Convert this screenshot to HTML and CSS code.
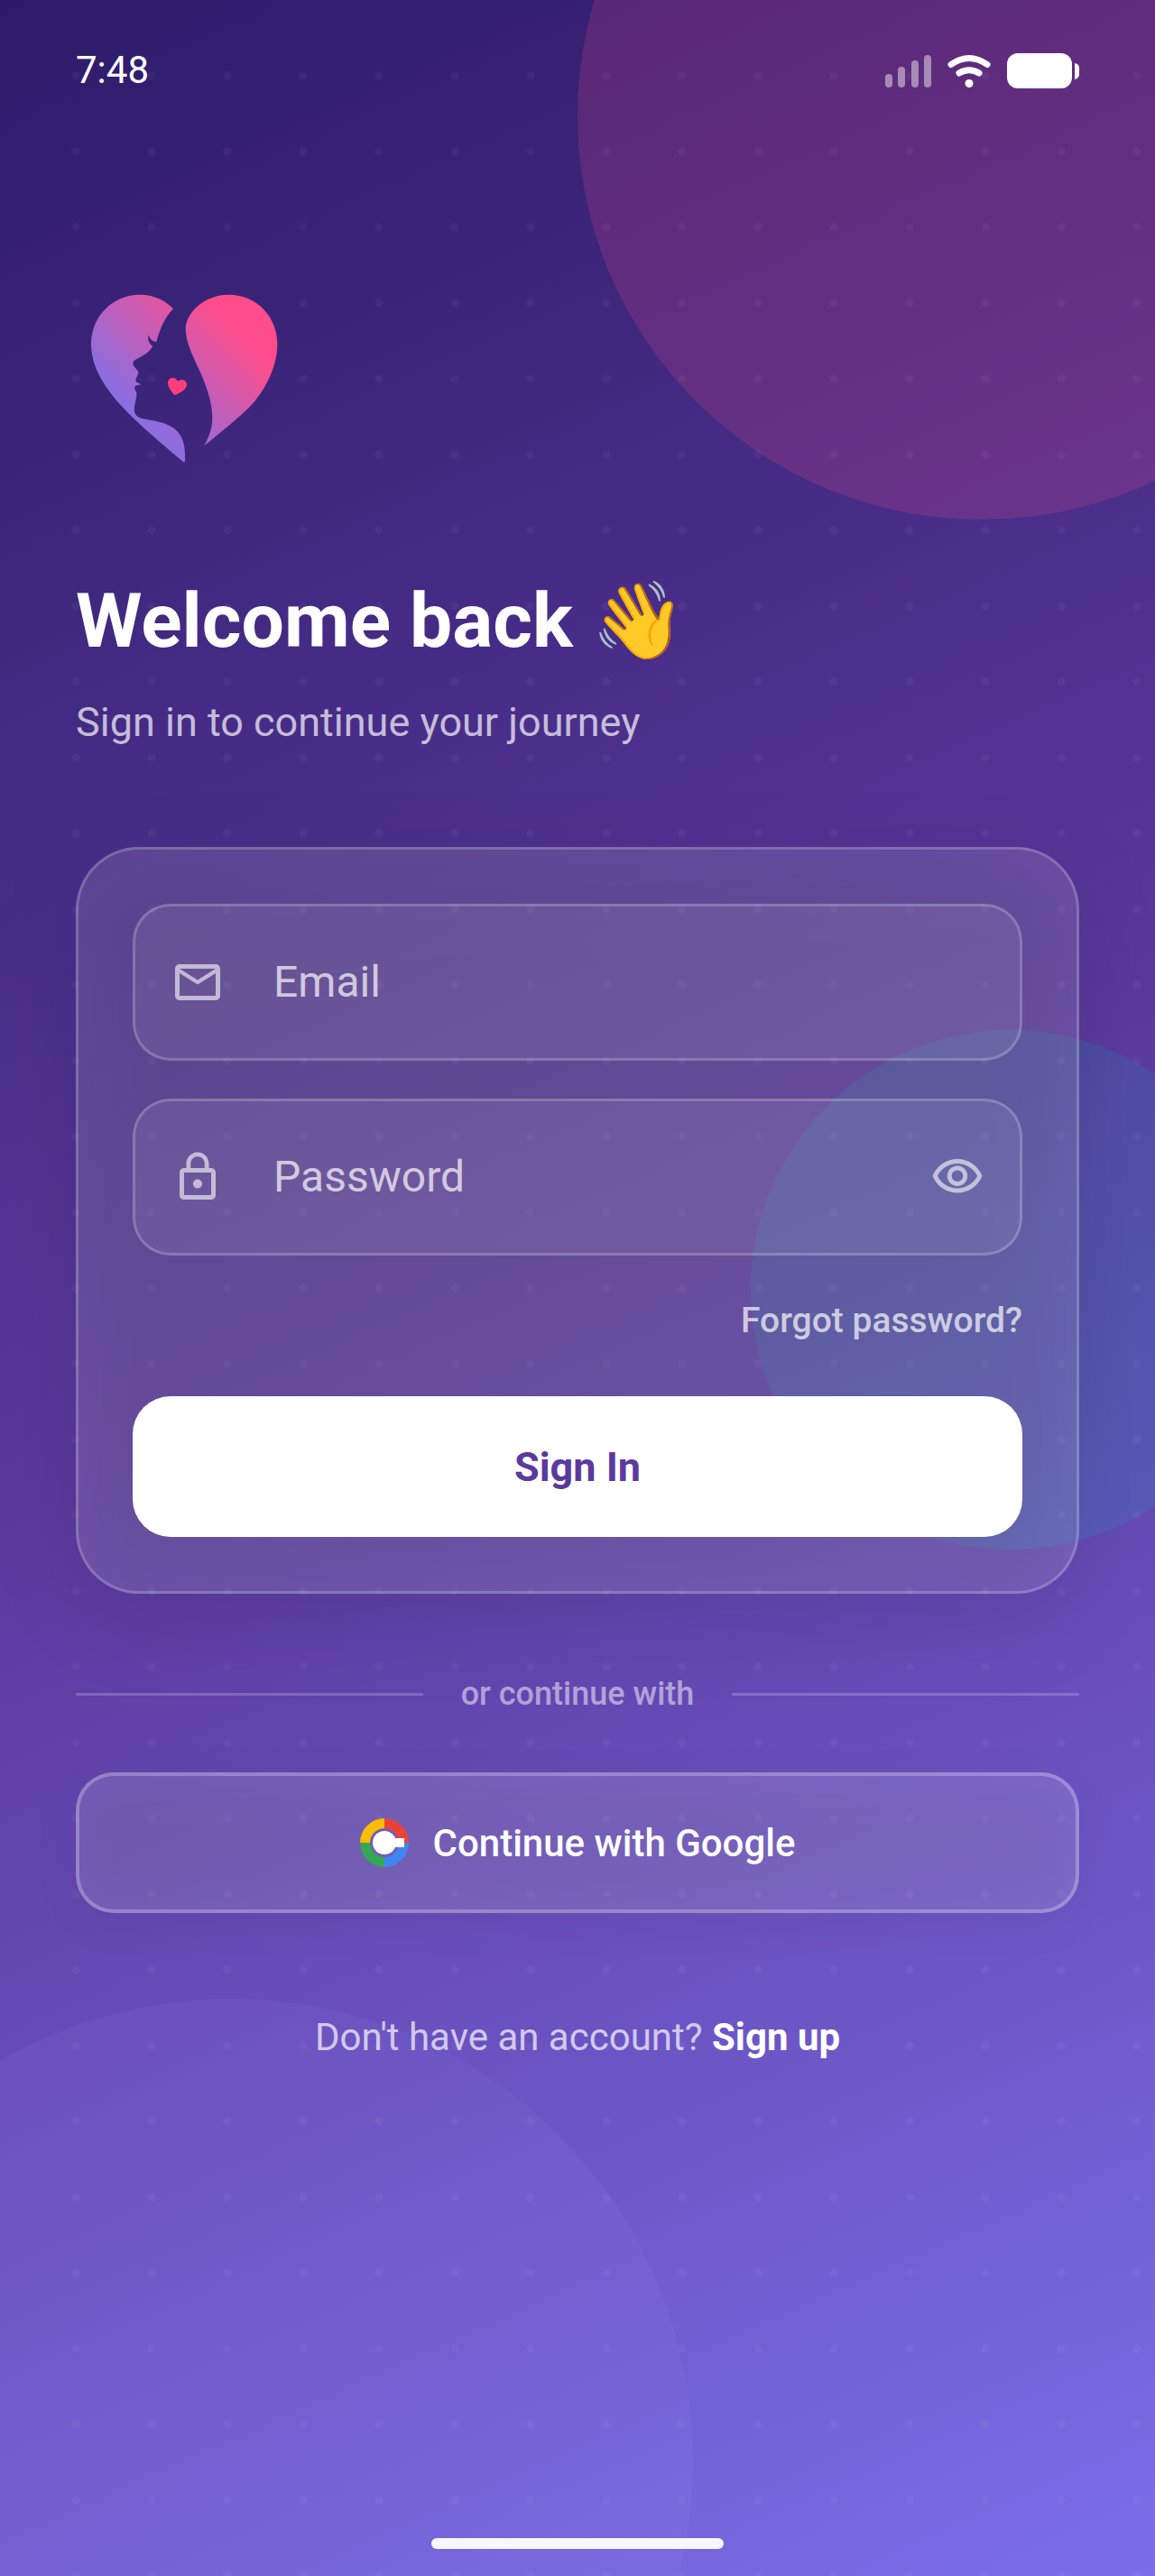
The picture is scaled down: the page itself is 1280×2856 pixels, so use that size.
FILE: index.html
```html
<!DOCTYPE html>
<html lang="en">
<head>
<meta charset="utf-8">
<meta name="viewport" content="width=device-width, initial-scale=1">
<title>Sign in</title>
<link rel="stylesheet" href="styles.css">
</head>
<body>
<div class="screen">
  <div class="backdrop" aria-hidden="true">
    <span class="orb orb-pink"></span>
    <span class="orb orb-teal"></span>
    <span class="orb orb-violet"></span>
    <span class="dots"></span>
  </div>

  <header class="status">
    <time class="status-time">7:48</time>
    <div class="status-icons" aria-hidden="true">
      <svg width="51" height="39" viewBox="0 0 51 39" fill="#fff" fill-opacity=".45">
        <rect x="0" y="23" width="8" height="15" rx="4"/>
        <rect x="14" y="15" width="8" height="23" rx="4"/>
        <rect x="29" y="8" width="8" height="30" rx="4"/>
        <rect x="43" y="2" width="8" height="36" rx="4"/>
      </svg>
      <svg width="48" height="39" viewBox="0 0 48 39" fill="none" stroke="#fff" stroke-width="7" stroke-linecap="round">
        <path d="M4 12.500Q24-1.500 44 12.500"/>
        <path d="M13 22Q24 15.500 35 22"/>
        <circle cx="24" cy="33.500" r="4.500" fill="#fff" stroke="none"/>
      </svg>
      <svg width="80" height="39" viewBox="0 0 80 39" fill="#fff">
        <rect width="72" height="39" rx="12"/>
        <path d="M75 11q5 1 5 5v7q0 5-5 6z"/>
      </svg>
    </div>
  </header>

  <main class="content">
    <svg class="logo" viewBox="72 0 720 720" role="img" aria-label="Logo">
      <defs>
        <linearGradient id="heart" gradientUnits="userSpaceOnUse" x1="150" y1="340" x2="450" y2="40">
          <stop offset="0" stop-color="#8c6ee0"/>
          <stop offset="1" stop-color="#ff4d8b"/>
        </linearGradient>
      </defs>
      <path fill="url(#heart)" d="M396 127C370 98 330 80 285 80C195 80 123 152 123 245C123 330 180 410 265 492C315 540 385 600 432 638C434 638 435 635 435 628C436 590 432 555 405 530C372 500 325 500 290 491C270 486 264 470 267 452C269 436 275 425 274 408C273 400 266 396 268 388C269 381 280 382 289 379C284 374 272 373 271 366C271 357 279 350 280 340C280 328 262 322 262 309C262 298 275 295 290 286C306 277 318 267 328 252C316 245 310 230 313 214C318 226 325 236 340 237C352 195 368 155 396 127Z"/>
      <path fill="url(#heart)" d="M580 80C670 80 742 150 742 245C742 320 700 400 655 448C620 486 550 540 499 583C514 555 526 525 526 490C526 430 500 370 480 325C460 282 437 235 437 192C440 135 505 80 580 80Z"/>
      <path fill="#ff3f7c" d="M400 414C390 402 378 388 378 373C379 355 403 350 411 368C422 358 441 362 441 380C440 395 420 407 400 414Z"/>
    </svg>

    <h1 class="title">Welcome back 👋</h1>
    <p class="subtitle">Sign in to continue your journey</p>

    <form class="card">
      <label class="field" for="email">
        <svg class="icon" viewBox="0 0 24 24" aria-hidden="true"><path d="M22 6c0-1.100-.9-2-2-2H4c-1.100 0-2 .9-2 2v12c0 1.100.9 2 2 2h16c1.100 0 2-.9 2-2V6zm-2 0l-8 5-8-5h16zm0 12H4V8l8 5 8-5v10z"/></svg>
        <input class="input" id="email" type="email" placeholder="Email" aria-label="Email">
      </label>
      <div class="field">
        <label class="icon-label" for="password" aria-label="Password">
          <svg class="icon" viewBox="0 0 24 24" aria-hidden="true"><path d="M12 17c1.100 0 2-.9 2-2s-.9-2-2-2-2 .9-2 2 .9 2 2 2zm6-9h-1V6c0-2.760-2.240-5-5-5S7 3.240 7 6v2H6c-1.100 0-2 .9-2 2v10c0 1.100.9 2 2 2h12c1.100 0 2-.9 2-2V10c0-1.100-.9-2-2-2zM8.900 6c0-1.710 1.390-3.100 3.100-3.100s3.100 1.390 3.100 3.100v2H8.900V6zM18 20H6V10h12v10z"/></svg>
        </label>
        <input class="input" id="password" type="password" placeholder="Password">
        <button class="reveal" type="button" aria-label="Show password">
          <svg class="icon" viewBox="0 0 24 24" aria-hidden="true"><path d="M12 6c3.790 0 7.170 2.130 8.820 5.500C19.170 14.870 15.790 17 12 17s-7.170-2.130-8.820-5.500C4.830 8.130 8.210 6 12 6m0-2C7 4 2.730 7.110 1 11.500 2.730 15.890 7 19 12 19s9.270-3.110 11-7.500C21.270 7.110 17 4 12 4zm0 5c1.380 0 2.500 1.120 2.500 2.500S13.380 14 12 14s-2.500-1.120-2.500-2.500S10.620 9 12 9m0-2c-2.480 0-4.500 2.020-4.500 4.500S9.520 16 12 16s4.500-2.020 4.500-4.500S14.480 7 12 7z"/></svg>
        </button>
      </div>
      <a class="forgot" href="#">Forgot password?</a>
      <button class="submit" type="submit">Sign In</button>
    </form>

    <div class="divider">or continue with</div>

    <button class="google" type="button">
      <svg width="54" height="54" viewBox="0 0 54 54" aria-hidden="true">
        <path fill="#ea4335" d="M27 0a27 27 0 0 1 27 27H43A16 16 0 0 0 27 11z"/>
        <path fill="#4285f4" d="M54 27a27 27 0 0 1-27 27V43a16 16 0 0 0 16-16z"/>
        <path fill="#34a853" d="M27 54A27 27 0 0 1 0 27h11a16 16 0 0 0 16 16z"/>
        <path fill="#fbbc05" d="M0 27A27 27 0 0 1 27 0v11a16 16 0 0 0-16 16z"/>
        <circle cx="27" cy="27" r="13" fill="#fff"/>
        <path fill="#fff" d="M27 22h22v10H27z"/>
      </svg>
      <span>Continue with Google</span>
    </button>

    <p class="signup">Don't have an account? <a href="#">Sign up</a></p>
  </main>

  <div class="home-bar" aria-hidden="true"></div>
</div>
</body>
</html>
```
FILE: styles.css
```css
*, *::before, *::after {
  box-sizing: border-box;
}

body {
  margin: 0;
  font-family: Roboto, "Noto Color Emoji", sans-serif;
  color: #fff;
}

.screen {
  position: relative;
  isolation: isolate;
  display: flex;
  flex-direction: column;
  min-height: 100vh;
  padding: 54px 84px 30px;
  background: linear-gradient(156deg, #2d1b69 0%, #5b3a9e 50%, #7b6ee8 100%);
}

/* Decorative circles and dot grid behind the content */
.backdrop {
  position: absolute;
  inset: 0;
  z-index: -1;
  overflow: hidden;
}

.orb {
  position: absolute;
  aspect-ratio: 1;
  border-radius: 50%;
}

.orb-pink {
  top: -320px;
  left: 50%;
  width: 70%;
  background: rgba(255, 77, 141, 0.18);
}

.orb-teal {
  top: 40%;
  left: 65%;
  width: 45%;
  background: rgba(0, 206, 201, 0.12);
}

.orb-violet {
  bottom: -384px;
  left: -20%;
  width: 80%;
  background: rgba(162, 155, 254, 0.08);
}

.dots {
  position: absolute;
  inset: 42px 0 0 42px;
  background: radial-gradient(circle, rgba(255, 255, 255, 0.04) 4px, transparent 5px) 0 0 / 84px 84px;
}

.status {
  display: flex;
  align-items: center;
  justify-content: space-between;
}

.status-time {
  font-size: 42px;
  line-height: 48px;
}

.status-icons {
  display: flex;
  gap: 18px;
}

.content {
  display: flex;
  flex-direction: column;
  padding-top: 198px;
}

.logo {
  width: 240px;
  height: 240px;
}

.title {
  margin: 99px 0 0;
  font-size: 84px;
  font-weight: 700;
  line-height: 100px;
}

.subtitle {
  margin: 35px 0 0;
  font-size: 45px;
  line-height: 54px;
  color: rgba(255, 255, 255, 0.7);
}

.card {
  position: relative;
  display: flex;
  flex-direction: column;
  margin-top: 111px;
  padding: 60px;
  border: 3px solid rgba(255, 255, 255, 0.2);
  border-radius: 70px;
  background: rgba(255, 255, 255, 0.12);
}

/* Soft shadows that also show through the translucent surfaces */
.card::before,
.google::before {
  content: "";
  position: absolute;
  z-index: -1;
}

.card::before {
  inset: 28px 0 -28px;
  border-radius: 70px;
  background: rgba(0, 0, 0, 0.1);
  filter: blur(48px);
}

.google::before {
  inset: 12px 0 -12px;
  border-radius: 42px;
  background: rgba(0, 0, 0, 0.06);
  filter: blur(24px);
}

.field {
  display: flex;
  align-items: center;
  height: 174px;
  padding: 0 39px;
  border: 3px solid rgba(255, 255, 255, 0.2);
  border-radius: 42px;
  background: rgba(255, 255, 255, 0.08);
}

.field + .field {
  margin-top: 42px;
}

.icon-label {
  display: flex;
}

.icon {
  flex: none;
  display: block;
  width: 60px;
  height: 60px;
  fill: rgba(255, 255, 255, 0.6);
}

.input {
  flex: 1;
  min-width: 0;
  margin-left: 54px;
  padding: 0;
  border: 0;
  outline: 0;
  background: none;
  font: inherit;
  font-size: 48px;
  line-height: 60px;
  color: #fff;
}

.input::placeholder {
  color: rgba(255, 255, 255, 0.7);
  opacity: 1;
}

.reveal {
  padding: 0;
  border: 0;
  background: none;
}

.forgot {
  align-self: flex-end;
  margin: 48px 0 60px;
  font-size: 39px;
  font-weight: 500;
  line-height: 48px;
  color: rgba(255, 255, 255, 0.7);
  text-decoration: none;
}

.submit {
  height: 156px;
  padding: 0;
  border: 0;
  border-radius: 42px;
  background: #fff;
  font: inherit;
  font-size: 45px;
  font-weight: 700;
  color: #5b3a9e;
}

.divider {
  display: flex;
  align-items: center;
  gap: 42px;
  margin-top: 87px;
  font-size: 36px;
  font-weight: 500;
  line-height: 48px;
  color: rgba(255, 255, 255, 0.5);
}

.divider::before,
.divider::after {
  content: "";
  flex: 1;
  height: 3px;
  background: rgba(255, 255, 255, 0.2);
}

.google {
  position: relative;
  display: flex;
  align-items: center;
  justify-content: center;
  gap: 27px;
  height: 156px;
  margin-top: 63px;
  padding: 0;
  border: 4px solid rgba(255, 255, 255, 0.25);
  border-radius: 42px;
  background: rgba(255, 255, 255, 0.13);
  font: inherit;
  font-size: 42px;
  font-weight: 500;
  color: #fff;
}

.signup {
  margin: 114px 0 0;
  font-size: 42px;
  line-height: 48px;
  text-align: center;
  color: rgba(255, 255, 255, 0.7);
}

.signup a {
  font-weight: 700;
  color: #fff;
  text-decoration: none;
}

.home-bar {
  align-self: center;
  width: 324px;
  height: 12px;
  margin-top: auto;
  border-radius: 6px;
  background: rgba(255, 255, 255, 0.95);
}
```
